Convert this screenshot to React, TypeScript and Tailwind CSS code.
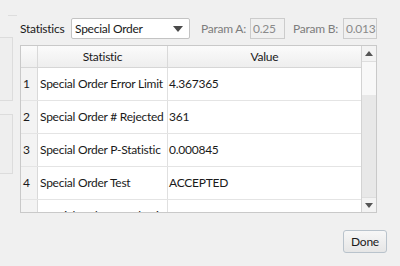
export default function App() {
  const rows = [
    ["1", "Special Order Error Limit", "4.367365"],
    ["2", "Special Order # Rejected", "361"],
    ["3", "Special Order P-Statistic", "0.000845"],
    ["4", "Special Order Test", "ACCEPTED"],
    ["5", "Special Order Sample Size", "5000"],
  ];
  return (
    <div className="w-[400px] h-[266px] bg-[#f0f0f0] flex overflow-hidden text-[12px] tracking-[-0.25px] leading-none text-[#1a1a1a] font-['Lato',sans-serif] whitespace-nowrap">
      {/* left background strip */}
      <div className="w-[20px] shrink-0 flex flex-col">
        <div className="mt-[15px] ml-[8px] w-[9px] h-px bg-[#dddddd]" />
        <div className="mt-[21px] w-[13px] h-[64px] border-t border-r border-b border-[#dcdcdc] bg-[#eeeeee]" />
        <div className="mt-[13px] w-[13px] h-[60px] border-t border-r border-b border-[#dcdcdc] bg-[#eeeeee]" />
      </div>

      <div className="flex-1 flex flex-col pt-[18px] pr-[13px]">
        {/* toolbar */}
        <div className="flex items-center h-[21px]">
          <span className="w-[51px]">Statistics</span>
          <div className="w-[119px] h-[21px] border border-[#c3c3c3] rounded-[2px] bg-white flex items-center justify-between pl-[3px] pr-[6px]">
            <span>Special Order</span>
            <svg width="10" height="6" viewBox="0 0 10 6">
              <path d="M0 0 L10 0 L5 6 Z" fill="#4a4a4a" />
            </svg>
          </div>
          <span className="ml-[11px] w-[49px] text-[#7d7d7d]">Param A:</span>
          <div className="w-[35px] h-[21px] border border-[#cccccc] bg-[#f0f0f0] flex items-center pl-[2px] text-[#8a8a8a]">0.25</div>
          <span className="ml-[8px] w-[50px] text-[#7d7d7d]">Param B:</span>
          <div className="w-[34px] h-[21px] border border-[#cccccc] bg-[#f0f0f0] flex items-center pl-[2px] text-[#8a8a8a]">0.013</div>
        </div>

        {/* table */}
        <div className="mt-[6px] w-[357px] h-[168px] border border-[#c9c9c9] bg-white flex">
          <div className="flex-1 flex flex-col overflow-hidden">
            <div className="h-[22px] shrink-0 flex border-b border-[#d6d6d6] bg-gradient-to-b from-[#fbfbfb] to-[#eeeeee]">
              <div className="w-[17px] border-r border-[#d9d9d9]" />
              <div className="w-[130px] border-r border-[#d9d9d9] flex items-center justify-center">Statistic</div>
              <div className="flex-1 flex items-center justify-center">Value</div>
            </div>
            {rows.map((r) => (
              <div key={r[0]} className="h-[33px] shrink-0 flex border-b border-[#e4e4e4]">
                <div className="w-[17px] border-r border-[#d9d9d9] bg-[#f3f3f3] flex items-center pl-[2px]">{r[0]}</div>
                <div className="w-[130px] border-r border-[#e0e0e0] flex items-center pl-[2px] overflow-hidden">{r[1]}</div>
                <div className="flex-1 flex items-center pl-[1px]">{r[2]}</div>
              </div>
            ))}
          </div>
          {/* scrollbar */}
          <div className="w-[15px] shrink-0 border-l border-[#d3d3d3] flex flex-col bg-[#e8e8e8]">
            <div className="h-[16px] bg-[#f3f3f3] border-b border-[#dedede] flex items-center justify-center">
              <svg width="8" height="5" viewBox="0 0 8 5">
                <path d="M0 5 L8 5 L4 0 Z" fill="#555555" />
              </svg>
            </div>
            <div className="h-[33px] bg-[#f8f8f8]" />
            <div className="flex-1" />
            <div className="h-[15px] bg-[#f3f3f3] border-t border-[#dedede] flex items-center justify-center">
              <svg width="8" height="5" viewBox="0 0 8 5">
                <path d="M0 0 L8 0 L4 5 Z" fill="#555555" />
              </svg>
            </div>
          </div>
        </div>

        {/* footer */}
        <div className="mt-[17px] flex justify-end">
          <button className="w-[44px] h-[23px] rounded-[3px] border border-[#b9c3cc] bg-gradient-to-b from-[#f7f7f7] to-[#e6e6e6] flex items-center justify-center text-[12px] text-[#1a1a1a]">
            Done
          </button>
        </div>
      </div>
    </div>
  );
}
